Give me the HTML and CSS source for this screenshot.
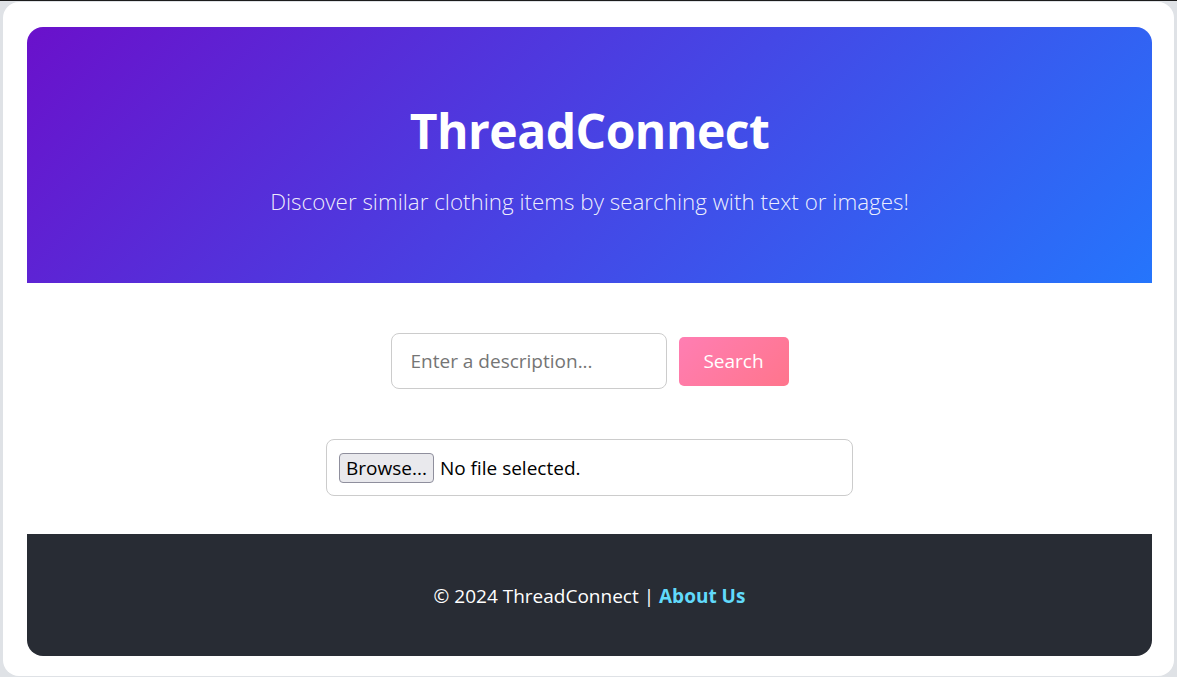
FILE: index.html
```html
<!DOCTYPE html>
<html lang="en">
<head>
<meta charset="utf-8">
<title>ThreadConnect</title>
<link rel="stylesheet" href="styles.css">
</head>
<body>
<div class="app">
  <header class="hero">
    <h1 class="hero-title">ThreadConnect</h1>
    <p class="hero-sub">Discover similar clothing items by searching with text or images!</p>
  </header>
  <main class="main">
    <form class="search-row">
      <input class="search-input" type="text" placeholder="Enter a description...">
      <button class="search-btn" type="button">Search</button>
    </form>
    <div class="file-box">
      <span class="file-btn">Browse...</span>
      <span class="file-text">No file selected.</span>
    </div>
  </main>
  <footer class="footer">
    <p class="footer-text">© 2024 ThreadConnect | <a class="footer-link" href="#">About Us</a></p>
  </footer>
</div>
</body>
</html>
```
FILE: styles.css
```css
html, body {
  margin: 0;
  padding: 0;
}
body {
  background: #dfe2e6;
  border-top: 1px solid #1c1c1c;
  font-family: "Open Sans", "Noto Sans", sans-serif;
  height: 676px;
  overflow: hidden;
}
.app {
  background: #ffffff;
  margin: 1px 3px 0 3px;
  border-radius: 16px;
  padding: 25px 22px 20px 24px;
}
.hero {
  background: linear-gradient(135deg, #6a11cb 0%, #2575fc 100%);
  border-radius: 16px 16px 0 0;
  height: 256px;
  box-sizing: border-box;
  padding-top: 72px;
  text-align: center;
  color: #fff;
}
.hero-title {
  margin: 0;
  font-size: 48px;
  font-weight: 700;
  line-height: 64px;
  letter-spacing: -0.5px;
}
.hero-sub {
  margin: 24px 0 0 0;
  font-size: 22.4px;
  font-weight: 300;
  line-height: 30px;
  color: rgba(255, 255, 255, 0.92);
}
.main {
  display: flex;
  flex-direction: column;
  align-items: center;
  gap: 50px;
  padding: 50px 0 38px 0;
}
.search-row {
  display: flex;
  align-items: center;
  gap: 12px;
  margin: 0;
}
.search-input {
  width: 276px;
  height: 56px;
  box-sizing: border-box;
  border: 1px solid #cccccc;
  border-radius: 8px;
  padding: 0 19px;
  font-family: inherit;
  font-size: 19px;
  color: #333;
  outline: none;
}
.search-input::placeholder {
  color: #757575;
}
.search-btn {
  width: 110px;
  height: 49px;
  border: none;
  border-radius: 5px;
  background: linear-gradient(135deg, #ff7eb3 0%, #ff758c 100%);
  color: #fff;
  font-family: inherit;
  font-size: 19px;
  cursor: pointer;
}
.file-box {
  width: 527px;
  height: 57px;
  box-sizing: border-box;
  border: 1px solid #cccccc;
  border-radius: 8px;
  padding: 0 12px;
  display: flex;
  align-items: center;
  gap: 6px;
}
.file-btn {
  background: #e9e9ed;
  border: 1px solid #8f8f9d;
  border-radius: 4px;
  height: 30px;
  box-sizing: border-box;
  padding: 0 6px;
  display: flex;
  align-items: center;
  font-size: 19px;
  color: #000;
}
.file-text {
  font-size: 19px;
  color: #000;
}
.footer {
  background: #282c34;
  border-radius: 0 0 16px 16px;
  height: 122px;
  display: flex;
  align-items: center;
  justify-content: center;
}
.footer-text {
  margin: 2px 0 0 0;
  color: #fff;
  font-size: 19px;
}
.footer-link {
  color: #61dafb;
  font-weight: 700;
  text-decoration: none;
}
```
